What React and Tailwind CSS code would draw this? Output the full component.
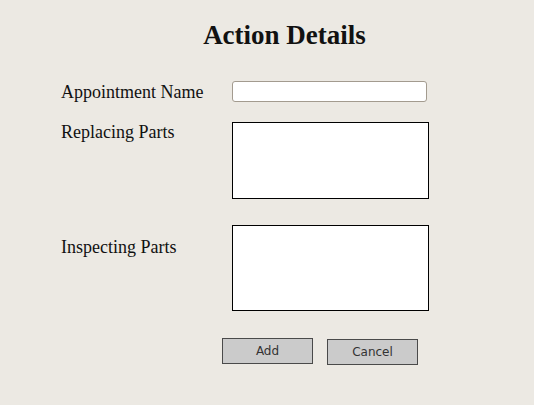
const App = () => {
    return (
        <div className="w-[534px] h-[405px] bg-[#ece9e3] text-[#111]" style={{ fontFamily: '"Liberation Serif", serif' }}>
            {/* Title */}
            <h1 className="pt-[20px] pl-[35px] text-center text-[27px] leading-[30px] font-bold">Action Details</h1>

            {/* Form */}
            <div className="pl-[61px] mt-[31px] grid grid-cols-[171px_197px] text-[18px] leading-[20px]">
                <label className="mt-[1px]">Appointment Name</label>
                <input
                    type="text"
                    className="w-[195px] h-[21px] bg-white border border-[#a39b8f] rounded-[3px] outline-none"
                />

                <label className="mt-[20px]">Replacing Parts</label>
                <textarea className="mt-[20px] w-[197px] h-[77px] bg-white border border-black resize-none outline-none" />

                <label className="mt-[38px]">Inspecting Parts</label>
                <textarea className="mt-[26px] w-[197px] h-[86px] bg-white border border-black resize-none outline-none" />
            </div>

            {/* Actions */}
            <div className="pl-[222px] mt-[27px] flex gap-[14px] items-start" style={{ fontFamily: '"DejaVu Sans", sans-serif' }}>
                <button className="w-[91px] h-[26px] bg-[#cbcbcb] border border-[#4a4a4a] text-[12px] text-[#333]">Add</button>
                <button className="mt-[1px] w-[91px] h-[26px] bg-[#cbcbcb] border border-[#4a4a4a] text-[12px] text-[#333]">Cancel</button>
            </div>
        </div>
    );
};

export default App;
